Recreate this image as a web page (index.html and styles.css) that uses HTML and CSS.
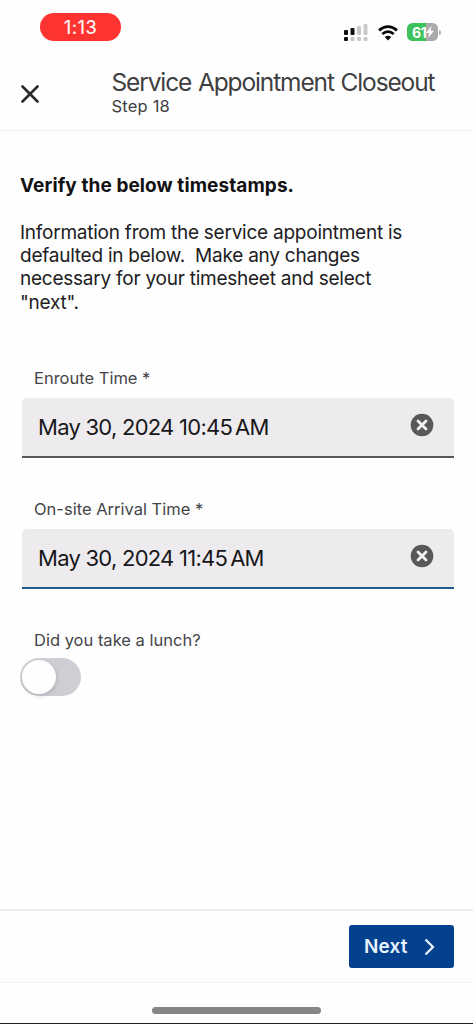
FILE: index.html
```html
<!DOCTYPE html>
<html lang="en">
<head>
<meta charset="utf-8">
<meta name="viewport" content="width=device-width, initial-scale=1">
<title>Service Appointment Closeout</title>
<link rel="stylesheet" href="styles.css">
</head>
<body>
<div class="screen">
  <div class="status">
    <span class="clock">1:13</span>
    <div class="indicators">
      <svg class="signal" width="25" height="18" viewBox="0 0 25 18">
        <g fill="#111"><rect x="0" y="6" width="4" height="5" rx="1"/><rect x="6.5" y="4" width="4" height="7" rx="1"/><rect x="0" y="13" width="4" height="4" rx="1"/></g>
        <g fill="#c9c9cc"><rect x="13" y="2" width="4" height="9" rx="1"/><rect x="19.5" y="0" width="4" height="11" rx="1"/><rect x="6.5" y="13" width="4" height="4" rx="1"/><rect x="13" y="13" width="4" height="4" rx="1"/><rect x="19.5" y="13" width="4" height="4" rx="1"/></g>
      </svg>
      <svg class="wifi" width="20" height="16" viewBox="0 0 20 16" fill="none" stroke="#080808" stroke-width="2.8">
        <path d="M1 5.4Q10-2.2 19 5.4"/><path d="M4.3 9Q10 4.3 15.7 9"/><path d="M10 15.5 6.8 12Q10 9.4 13.2 12Z" fill="#080808" stroke="none"/>
      </svg>
      <div class="battery">
        <span class="level">61</span>
        <svg class="bolt" width="8" height="12" viewBox="0 0 8 12"><path d="M5.5 0 0 7h3.3L2.2 12 8 4.8H4.6Z" fill="#fff"/></svg>
      </div>
      <i class="battery-tip"></i>
    </div>
  </div>
  <header class="header">
    <svg class="close" width="18" height="18" viewBox="0 0 18 18"><path d="M1.5 1.5 16.5 16.5M16.5 1.5 1.5 16.5" stroke="#29292b" stroke-width="2.6" stroke-linecap="round"/></svg>
    <div class="titles">
      <h1 class="title">Service Appointment Closeout</h1>
      <p class="step">Step 18</p>
    </div>
  </header>
  <main class="content">
    <h2 class="heading">Verify the below timestamps.</h2>
    <p class="description">Information from the service appointment is<br>defaulted in below.&nbsp; Make any changes<br>necessary for your timesheet and select<br>"next".</p>
    <div class="field">
      <span class="label">Enroute Time *</span>
      <div class="input"><span class="value">May 30, 2024 10:45<span class="ampm">AM</span></span>
        <svg class="clear" width="24" height="24" viewBox="0 0 24 24"><circle cx="12" cy="12" r="11.3" fill="#58585a"/><path d="M8 8 16 16M16 8 8 16" stroke="#f4f2f5" stroke-width="2.8" stroke-linecap="round"/></svg>
      </div>
    </div>
    <div class="field">
      <span class="label">On-site Arrival Time *</span>
      <div class="input focused"><span class="value">May 30, 2024 11:45<span class="ampm">AM</span></span>
        <svg class="clear" width="24" height="24" viewBox="0 0 24 24"><circle cx="12" cy="12" r="11.3" fill="#58585a"/><path d="M8 8 16 16M16 8 8 16" stroke="#f4f2f5" stroke-width="2.8" stroke-linecap="round"/></svg>
      </div>
    </div>
    <div class="lunch">
      <span class="label">Did you take a lunch?</span>
      <div class="toggle"><i class="knob"></i></div>
    </div>
  </main>
  <footer class="footer">
    <div class="next"><span>Next</span>
      <svg width="11" height="18" viewBox="0 0 11 18" fill="none" stroke="#e8f2fc" stroke-width="2.3"><path d="M1.5 1.5 9 9 1.5 16.5"/></svg>
    </div>
  </footer>
  <div class="home"><i class="home-bar"></i></div>
</div>
</body>
</html>
```
FILE: styles.css
```css
* { box-sizing: border-box; }
body { margin: 0; background: #fefefe; font-family: Inter, "Liberation Sans", sans-serif; color: #202022; }
h1, h2, p { margin: 0; font-weight: 400; }
svg { display: block; flex: none; }
.screen { width: 473px; height: 1024px; display: flex; flex-direction: column; overflow: hidden; white-space: nowrap; border-bottom: 1px solid #222; }
.status { height: 55px; display: flex; justify-content: space-between; align-items: flex-start; padding: 13px 32px 0 40px; }
.clock { width: 81px; height: 28px; border-radius: 14px; background: #fd342f; color: #fff0ed; font-size: 18px; font-weight: 500; line-height: 29px; letter-spacing: .4px; text-align: center; }
.indicators { display: flex; align-items: center; padding-top: 10px; }
.signal { margin-top: 1px; }
.wifi { margin: 0 9px 0 9px; }
.battery { width: 31px; height: 18px; margin-top: -1px; border-radius: 5.5px; display: flex; align-items: center; padding-left: 5px; background: linear-gradient(90deg, #3cc25b 62%, #aaaaac 62%); }
.level { color: #fff; font-size: 14px; font-weight: 700; letter-spacing: -.4px; }
.battery-tip { width: 2px; height: 5px; margin-left: 1px; background: #b5b5b7; border-radius: 0 2px 2px 0; }
.header { height: 76px; display: flex; padding: 12px 20px 0 21px; border-bottom: 1px solid #f2f0f4; }
.close { margin-top: 18px; }
.titles { margin-left: 72.5px; color: #3f3f42; }
.title { font-size: 24.5px; line-height: 30px; letter-spacing: -1.13px; word-spacing: 1px; }
.step { font-size: 16.5px; line-height: 19px; letter-spacing: .2px; }
.content { flex: 1; padding: 43px 20px 0; }
.heading { font-size: 19px; line-height: 23px; font-weight: 700; letter-spacing: .08px; color: #111113; }
.description { margin-top: 24px; font-size: 19px; line-height: 23.2px; letter-spacing: -.24px; }
.field { margin-left: 2px; width: 432px; }
.label { display: block; margin-left: 12px; font-size: 16.5px; line-height: 19px; color: #454548; }
.input { margin-top: 10px; height: 60px; display: flex; align-items: center; justify-content: space-between; padding: 0 20px 4px 16px; background: #edebee; border-bottom: 2px solid #58585a; border-radius: 5px 5px 0 0; }
.description + .field { margin-top: 55px; }
.field + .field { margin-top: 42px; }
.focused { border-bottom-color: #235a8c; }
.value { padding-top: 4px; font-size: 22px; letter-spacing: -.74px; color: #171719; }
.ampm { margin-left: 3px; }
.lunch { margin-top: 42px; }
.lunch .label { margin-left: 14px; }
.toggle { width: 61px; height: 38px; margin-top: 8px; padding: 2px; border-radius: 19px; background: #cfced5; }
.knob { display: block; width: 34px; height: 34px; border-radius: 50%; background: #fefefe; box-shadow: 1px 2px 4px #0002; }
.footer { height: 74px; border-top: 2px solid #ececee; border-bottom: 1px solid #f5f3f7; display: flex; justify-content: flex-end; padding: 14px 19px 0; }
.next { width: 105px; height: 43px; border-radius: 3px; background: #03408d; color: #e8f2fc; font-size: 19px; font-weight: 600; letter-spacing: .1px; display: flex; align-items: center; justify-content: space-between; padding: 0 19px 0 15px; }
.home { height: 40px; padding-top: 24px; }
.home-bar { display: block; width: 169px; height: 7px; margin: 0 auto; border-radius: 4px; background: #868686; }
```
